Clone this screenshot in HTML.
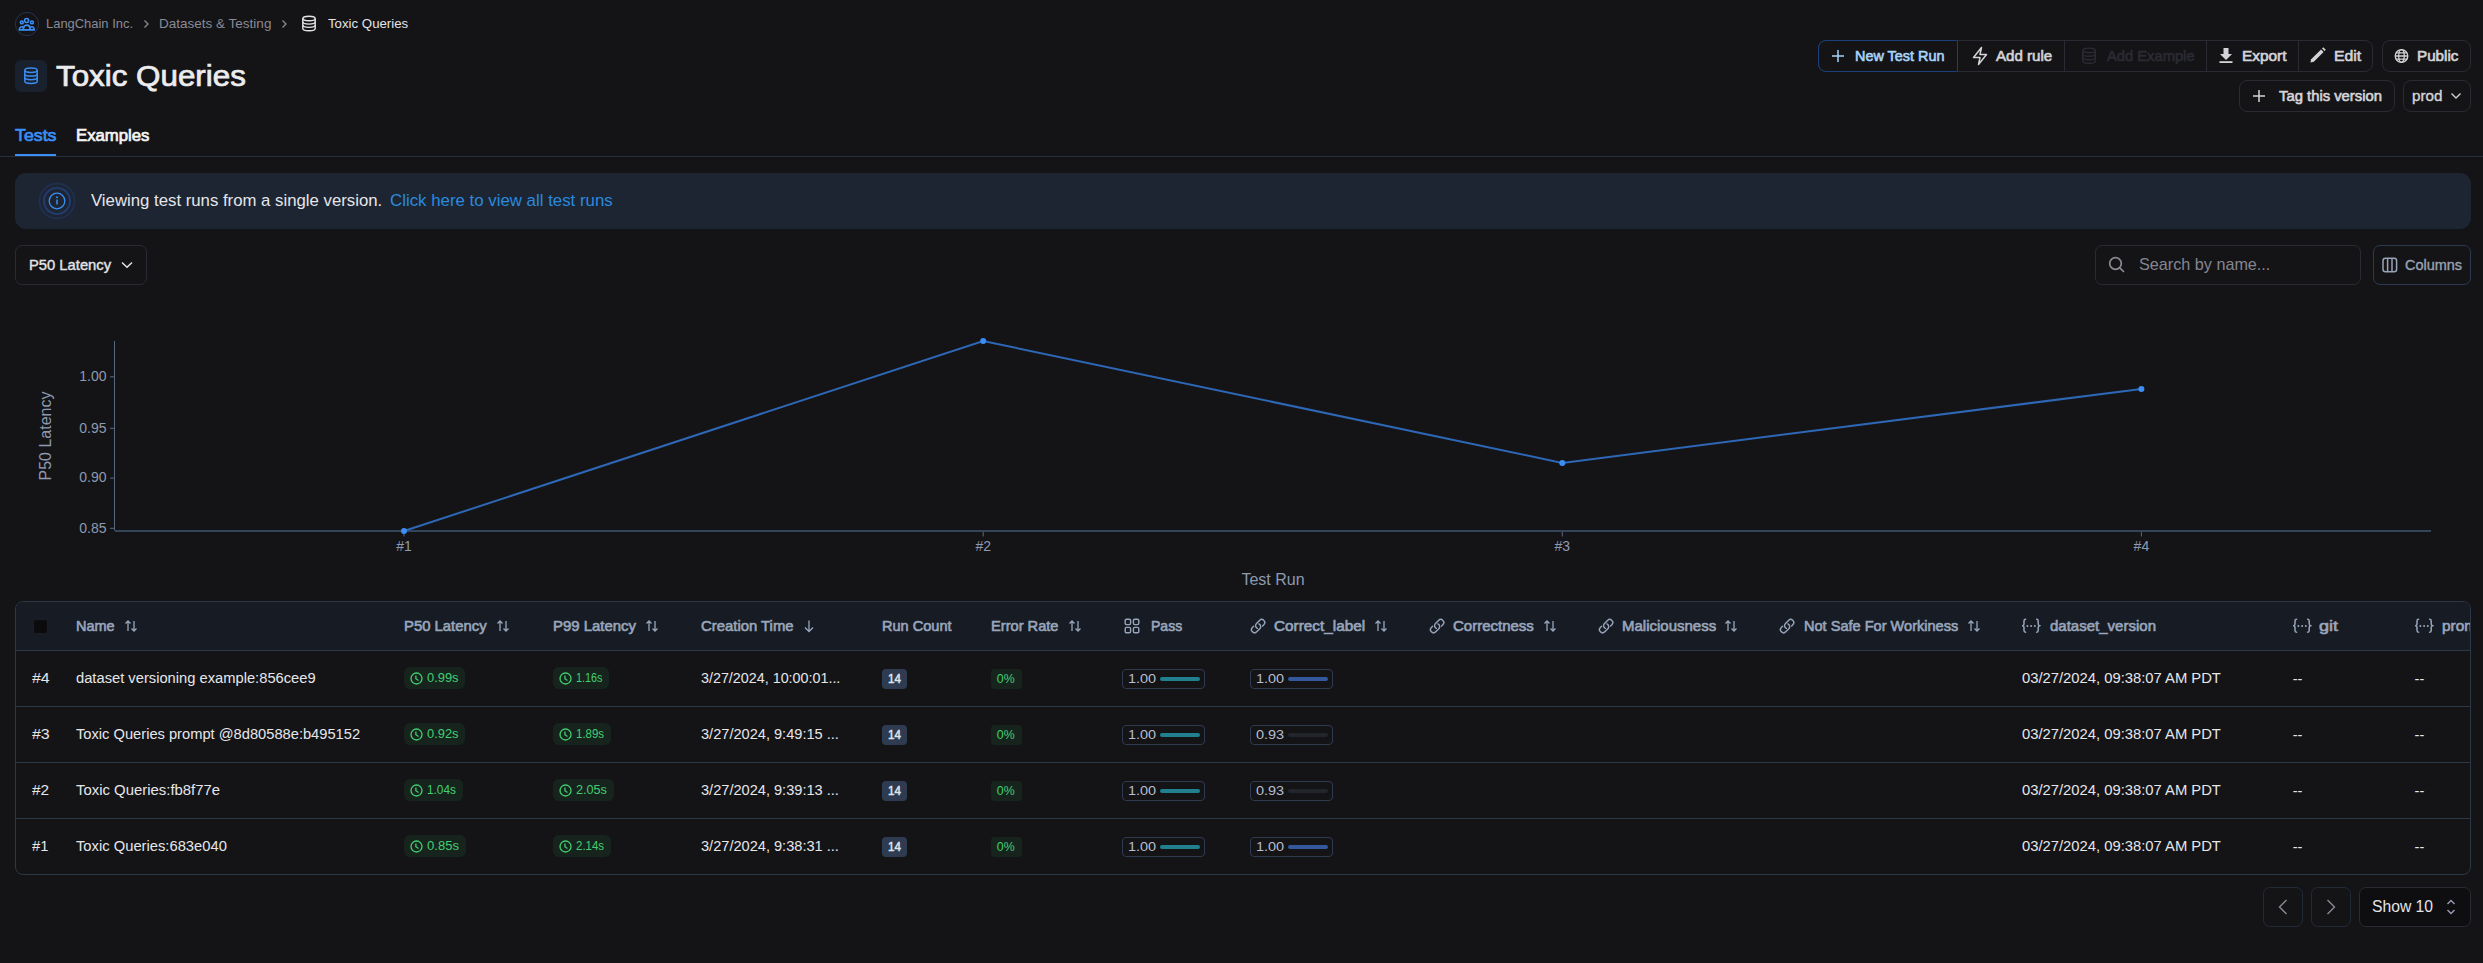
<!DOCTYPE html>
<html><head><meta charset="utf-8"><title>Toxic Queries</title>
<style>
html,body{margin:0;padding:0;}
body{width:2483px;height:963px;background:#141417;position:relative;overflow:hidden;font-family:"Liberation Sans",sans-serif;}
.t{position:absolute;line-height:40px;white-space:nowrap;}
.r{position:absolute;}
</style></head><body>
<svg class="r" style="left:15px;top:12px;" width="24" height="24" viewBox="0 0 24 24" fill="none"><circle cx="12" cy="12" r="11.6" stroke="#26364d" stroke-width="1"/><g stroke="#3b8ef5" stroke-width="1.6" fill="none" stroke-linecap="round"><circle cx="11.6" cy="8.5" r="2.0"/><circle cx="6.8" cy="10.4" r="1.4"/><circle cx="16.9" cy="10.4" r="1.4"/><path d="M4.4 17.9H19.2"/><path d="M4.4 17.6c0-1.8 1.1-2.8 2.5-2.8.9 0 1.5.3 1.9.8M19.2 17.6c0-1.8-1.1-2.8-2.5-2.8-.9 0-1.5.3-1.9.8"/><path d="M8.2 17.6c0-2.8 1.5-4.5 3.5-4.5s3.5 1.7 3.5 4.5"/></g></svg>
<div class="t" style="left:45.7px;top:4px;font-size:13.3px;color:#8a8a95;transform:scaleX(0.9723);transform-origin:0 0;">LangChain Inc.</div>
<svg class="r" style="left:142px;top:18px;" width="10" height="12" viewBox="0 0 10 12" fill="none"><path d="M2.5 2.5l3.5 3.5-3.5 3.5" stroke="#8a8a95" stroke-width="1.3"/></svg>
<div class="t" style="left:159.3px;top:4px;font-size:13.3px;color:#8a8a95;transform:scaleX(1.0161);transform-origin:0 0;">Datasets &amp; Testing</div>
<svg class="r" style="left:280px;top:18px;" width="10" height="12" viewBox="0 0 10 12" fill="none"><path d="M2.5 2.5l3.5 3.5-3.5 3.5" stroke="#8a8a95" stroke-width="1.3"/></svg>
<svg class="r" style="left:301px;top:15px;" width="16" height="17" viewBox="0 0 16 17" fill="none"><g stroke="#e4e4e7" stroke-width="1.4"><ellipse cx="8" cy="3.5" rx="6.2" ry="2.3"/><path d="M1.8 3.5v10c0 1.3 2.8 2.3 6.2 2.3s6.2-1 6.2-2.3v-10"/><path d="M1.8 6.8c0 1.3 2.8 2.3 6.2 2.3s6.2-1 6.2-2.3M1.8 10.1c0 1.3 2.8 2.3 6.2 2.3s6.2-1 6.2-2.3"/></g></svg>
<div class="t" style="left:327.8px;top:4px;font-size:13.3px;color:#e4e4e7;transform:scaleX(0.9954);transform-origin:0 0;">Toxic Queries</div>
<div class="r" style="left:15px;top:60px;width:32px;height:32px;background:#19212e;border-radius:6px"></div>
<svg class="r" style="left:23px;top:67px;" width="16" height="18" viewBox="0 0 16 18" fill="none"><g stroke="#3b8ef5" stroke-width="1.5"><ellipse cx="8" cy="3.2" rx="6.2" ry="2.2"/><path d="M1.8 3.2v11c0 1.2 2.8 2.2 6.2 2.2s6.2-1 6.2-2.2v-11"/><path d="M1.8 6.9c0 1.2 2.8 2.2 6.2 2.2s6.2-1 6.2-2.2M1.8 10.5c0 1.2 2.8 2.2 6.2 2.2s6.2-1 6.2-2.2"/></g></svg>
<div class="t" style="left:55.6px;top:56px;font-size:29.6px;color:#ececef;transform:scaleX(1.0591);transform-origin:0 0;-webkit-text-stroke-width:0.74px;">Toxic Queries</div>
<div class="r" style="left:1818px;top:40px;width:555px;height:32px;border:1px solid #2a2a33;border-radius:8px;box-sizing:border-box"></div>
<div class="r" style="left:1818px;top:40px;width:140px;height:32px;border:1px solid #193f7e;border-radius:8px 0 0 8px;box-sizing:border-box"></div>
<div class="r" style="left:2064px;top:41px;width:1px;height:30px;background:#2a2a33"></div>
<div class="r" style="left:2206px;top:41px;width:1px;height:30px;background:#2a2a33"></div>
<div class="r" style="left:2298px;top:41px;width:1px;height:30px;background:#2a2a33"></div>
<svg class="r" style="left:1831px;top:49px;" width="14" height="14" viewBox="0 0 14 14" fill="none"><path d="M7 1v12M1 7h12" stroke="#a6d4fa" stroke-width="1.5"/></svg>
<div class="t" style="left:1855.3px;top:36px;font-size:15.3px;color:#a6d4fa;transform:scaleX(0.9422);transform-origin:0 0;-webkit-text-stroke-width:0.64px;">New Test Run</div>
<svg class="r" style="left:1971px;top:46px;" width="19" height="20" viewBox="0 0 19 20" fill="none"><path d="M10.5 1.5L2.5 11.5h6.5l-1.5 7 8-10H9z" stroke="#d4d4d8" stroke-width="1.5" stroke-linejoin="round"/></svg>
<div class="t" style="left:1995.9px;top:36px;font-size:15.3px;color:#d4d4d8;transform:scaleX(0.9863);transform-origin:0 0;-webkit-text-stroke-width:0.64px;">Add rule</div>
<svg class="r" style="left:2081px;top:47px;" width="16" height="18" viewBox="0 0 16 18" fill="none"><g stroke="#2b2b33" stroke-width="1.4"><ellipse cx="8" cy="3.4" rx="6.3" ry="2.3"/><path d="M1.7 3.4v10.6c0 1.3 2.8 2.3 6.3 2.3s6.3-1 6.3-2.3V3.4"/><path d="M1.7 6.9c0 1.3 2.8 2.3 6.3 2.3s6.3-1 6.3-2.3M1.7 10.4c0 1.3 2.8 2.3 6.3 2.3s6.3-1 6.3-2.3"/></g></svg>
<div class="t" style="left:2106.7px;top:36px;font-size:15.3px;color:#2b2b33;transform:scaleX(0.9626);transform-origin:0 0;-webkit-text-stroke-width:0.64px;">Add Example</div>
<svg class="r" style="left:2218px;top:47px;" width="16" height="17" viewBox="0 0 16 17" fill="none"><path d="M5.5 1h5v6h3.5L8 13 2 7h3.5z" fill="#d4d4d8"/><rect x="1.5" y="14.2" width="13" height="1.8" fill="#d4d4d8"/></svg>
<div class="t" style="left:2242.0px;top:36px;font-size:15.3px;color:#d4d4d8;transform:scaleX(1.0069);transform-origin:0 0;-webkit-text-stroke-width:0.64px;">Export</div>
<svg class="r" style="left:2309px;top:46px;" width="18" height="18" viewBox="0 0 18 18" fill="none"><path d="M2.2 13.2L12 3.4l2.6 2.6-9.8 9.8-3.4.8z" fill="#d4d4d8"/><path d="M13 2.4l1.2-1.2 2.6 2.6-1.2 1.2z" fill="#d4d4d8"/></svg>
<div class="t" style="left:2334.2px;top:36px;font-size:15.3px;color:#d4d4d8;transform:scaleX(1.0298);transform-origin:0 0;-webkit-text-stroke-width:0.64px;">Edit</div>
<div class="r" style="left:2382px;top:40px;width:89px;height:32px;border:1px solid #2a2a33;border-radius:8px;box-sizing:border-box"></div>
<svg class="r" style="left:2394px;top:48px;" width="15" height="16" viewBox="0 0 15 16" fill="none"><g stroke="#d4d4d8" stroke-width="1.3"><circle cx="7.5" cy="8" r="6.3"/><ellipse cx="7.5" cy="8" rx="2.8" ry="6.3"/><path d="M1.2 8h12.6M2 4.8h11M2 11.2h11"/></g></svg>
<div class="t" style="left:2417.0px;top:36px;font-size:15.3px;color:#d4d4d8;transform:scaleX(0.9938);transform-origin:0 0;-webkit-text-stroke-width:0.64px;">Public</div>
<div class="r" style="left:2239px;top:80px;width:156px;height:32px;border:1px solid #2a2a33;border-radius:8px;box-sizing:border-box"></div>
<svg class="r" style="left:2252px;top:89px;" width="14" height="14" viewBox="0 0 14 14" fill="none"><path d="M7 1v12M1 7h12" stroke="#d4d4d8" stroke-width="1.5"/></svg>
<div class="t" style="left:2279.2px;top:76px;font-size:15.3px;color:#d4d4d8;transform:scaleX(0.9690);transform-origin:0 0;-webkit-text-stroke-width:0.64px;">Tag this version</div>
<div class="r" style="left:2403px;top:80px;width:68px;height:32px;border:1px solid #2a2a33;border-radius:8px;box-sizing:border-box"></div>
<div class="t" style="left:2412.0px;top:76px;font-size:15.1px;color:#d4d4d8;transform:scaleX(1.0064);transform-origin:0 0;-webkit-text-stroke-width:0.38px;">prod</div>
<svg class="r" style="left:2450px;top:92px;" width="12" height="8" viewBox="0 0 12 8" fill="none"><path d="M1.5 1.5l4.5 4.5 4.5-4.5" stroke="#d4d4d8" stroke-width="1.3"/></svg>
<div class="t" style="left:15.0px;top:116px;font-size:16.6px;color:#3b8ef5;transform:scaleX(1.0705);transform-origin:0 0;-webkit-text-stroke-width:0.70px;">Tests</div>
<div class="t" style="left:76.3px;top:116px;font-size:16.6px;color:#f4f4f5;transform:scaleX(1.0075);transform-origin:0 0;-webkit-text-stroke-width:0.70px;">Examples</div>
<div class="r" style="left:0px;top:156px;width:2483px;height:1px;background:#243042"></div>
<div class="r" style="left:15px;top:154px;width:41px;height:2px;background:#3b8ef5"></div>
<div class="r" style="left:15px;top:173px;width:2456px;height:56px;background:#1d2533;border-radius:11px"></div>
<svg class="r" style="left:37px;top:181px;" width="40" height="40" viewBox="0 0 40 40" fill="none"><circle cx="20" cy="20" r="17.5" stroke="#1f2f4c" stroke-width="2"/><circle cx="20" cy="20" r="13" stroke="#223b6c" stroke-width="2.2"/><circle cx="20" cy="20" r="7.8" stroke="#3b8ef5" stroke-width="1.3"/><path d="M20 18.6v5" stroke="#3b8ef5" stroke-width="1.5"/><circle cx="20" cy="16.2" r="0.95" fill="#3b8ef5"/></svg>
<div class="t" style="left:91.2px;top:181px;font-size:16.7px;color:#e6e6ea;transform:scaleX(1.0041);transform-origin:0 0;">Viewing test runs from a single version.</div>
<div class="t" style="left:390.0px;top:181px;font-size:16.7px;color:#2a8ade;transform:scaleX(1.0090);transform-origin:0 0;">Click here to view all test runs</div>
<div class="r" style="left:15px;top:245px;width:132px;height:40px;border:1px solid #2a2a33;border-radius:7px;box-sizing:border-box"></div>
<div class="t" style="left:28.6px;top:245px;font-size:15.2px;color:#e4e4e7;transform:scaleX(0.9722);transform-origin:0 0;-webkit-text-stroke-width:0.38px;">P50 Latency</div>
<svg class="r" style="left:120px;top:260px;" width="14" height="10" viewBox="0 0 14 10" fill="none"><path d="M2 2.5l5 4.8 5-4.8" stroke="#e4e4e7" stroke-width="1.5"/></svg>
<div class="r" style="left:2095px;top:245px;width:266px;height:40px;border:1px solid #2a2a33;border-radius:7px;box-sizing:border-box"></div>
<svg class="r" style="left:2107px;top:255px;" width="20" height="20" viewBox="0 0 20 20" fill="none"><circle cx="8.5" cy="8.5" r="5.8" stroke="#8a8a95" stroke-width="1.7"/><path d="M12.8 12.8l4.2 4.2" stroke="#8a8a95" stroke-width="1.7"/></svg>
<div class="t" style="left:2139.3px;top:244px;font-size:16.1px;color:#85858f;transform:scaleX(1.0058);transform-origin:0 0;">Search by name...</div>
<div class="r" style="left:2373px;top:245px;width:98px;height:40px;border:1px solid #2b3a50;border-radius:7px;box-sizing:border-box"></div>
<svg class="r" style="left:2382px;top:257px;" width="16" height="16" viewBox="0 0 16 16" fill="none"><rect x="1" y="1.2" width="13.6" height="13.6" rx="2.5" stroke="#97a3b6" stroke-width="1.5"/><path d="M5.6 1.5v13M10 1.5v13" stroke="#97a3b6" stroke-width="1.5"/></svg>
<div class="t" style="left:2405.0px;top:245px;font-size:14.8px;color:#97a3b6;transform:scaleX(0.9773);transform-origin:0 0;-webkit-text-stroke-width:0.37px;">Columns</div>
<svg class="r" style="left:0;top:0" width="2483" height="963" font-family="Liberation Sans"><line x1="114.5" y1="341" x2="114.5" y2="530.5" stroke="#586880" stroke-width="1"/><line x1="115" y1="531" x2="2431" y2="531" stroke="#34445a" stroke-width="2"/><line x1="110" y1="376.8" x2="114.5" y2="376.8" stroke="#586880" stroke-width="1"/><text x="106.5" y="381.0" text-anchor="end" font-size="14" fill="#8e9ab0">1.00</text><line x1="110" y1="428.3" x2="114.5" y2="428.3" stroke="#586880" stroke-width="1"/><text x="106.5" y="432.5" text-anchor="end" font-size="14" fill="#8e9ab0">0.95</text><line x1="110" y1="478.1" x2="114.5" y2="478.1" stroke="#586880" stroke-width="1"/><text x="106.5" y="482.3" text-anchor="end" font-size="14" fill="#8e9ab0">0.90</text><line x1="110" y1="528.3" x2="114.5" y2="528.3" stroke="#586880" stroke-width="1"/><text x="106.5" y="532.5" text-anchor="end" font-size="14" fill="#8e9ab0">0.85</text><line x1="404" y1="532" x2="404" y2="536.5" stroke="#586880" stroke-width="1"/><text x="404" y="551.3" text-anchor="middle" font-size="14" fill="#8e9ab0">#1</text><line x1="983.2" y1="532" x2="983.2" y2="536.5" stroke="#586880" stroke-width="1"/><text x="983.2" y="551.3" text-anchor="middle" font-size="14" fill="#8e9ab0">#2</text><line x1="1562.3" y1="532" x2="1562.3" y2="536.5" stroke="#586880" stroke-width="1"/><text x="1562.3" y="551.3" text-anchor="middle" font-size="14" fill="#8e9ab0">#3</text><line x1="2141.4" y1="532" x2="2141.4" y2="536.5" stroke="#586880" stroke-width="1"/><text x="2141.4" y="551.3" text-anchor="middle" font-size="14" fill="#8e9ab0">#4</text><polyline points="404,531 983.2,341 1562.3,462.9 2141.4,388.9" stroke="#2d67b6" stroke-width="2" fill="none"/><circle cx="404" cy="531" r="3" fill="#3b8ef5"/><circle cx="983.2" cy="341" r="3" fill="#3b8ef5"/><circle cx="1562.3" cy="462.9" r="3" fill="#3b8ef5"/><circle cx="2141.4" cy="388.9" r="3" fill="#3b8ef5"/><text x="1273" y="585" text-anchor="middle" font-size="16" fill="#8e9ab0">Test Run</text><text transform="translate(50.8 436) rotate(-90)" text-anchor="middle" font-size="16" fill="#8e9ab0">P50 Latency</text></svg>
<div class="r" style="left:15px;top:601px;width:2456px;height:274px;border:1px solid #2c3747;border-radius:8px;box-sizing:border-box;overflow:hidden"></div>
<div class="r" style="left:16px;top:602px;width:2454px;height:48px;background:#171b24;border-radius:7px 7px 0 0"></div>
<div class="r" style="left:16px;top:650px;width:2454px;height:1px;background:#2c3747"></div>
<div class="r" style="left:16px;top:706px;width:2454px;height:1px;background:#2c3747"></div>
<div class="r" style="left:16px;top:762px;width:2454px;height:1px;background:#2c3747"></div>
<div class="r" style="left:16px;top:818px;width:2454px;height:1px;background:#2c3747"></div>
<div class="r" style="left:32.5px;top:618.5px;width:15px;height:15px;background:#0b0b0e;border-radius:3px;border:1px solid #1c1c22;box-sizing:border-box"></div>
<div class="t" style="left:76.4px;top:606px;font-size:14.6px;color:#98a6bc;transform:scaleX(0.9931);transform-origin:0 0;-webkit-text-stroke-width:0.61px;">Name</div>
<svg class="r" style="left:124px;top:619px;" width="14" height="14" viewBox="0 0 14 14" fill="none"><g stroke="#98a6bc" stroke-width="1.3"><path d="M4 12V2M1.5 4.5L4 2l2.5 2.5"/><path d="M10 2v10M7.5 9.5L10 12l2.5-2.5"/></g></svg>
<div class="t" style="left:404.3px;top:606px;font-size:14.6px;color:#98a6bc;transform:scaleX(1.0179);transform-origin:0 0;-webkit-text-stroke-width:0.61px;">P50 Latency</div>
<svg class="r" style="left:496px;top:619px;" width="14" height="14" viewBox="0 0 14 14" fill="none"><g stroke="#98a6bc" stroke-width="1.3"><path d="M4 12V2M1.5 4.5L4 2l2.5 2.5"/><path d="M10 2v10M7.5 9.5L10 12l2.5-2.5"/></g></svg>
<div class="t" style="left:552.8px;top:606px;font-size:14.6px;color:#98a6bc;transform:scaleX(1.0216);transform-origin:0 0;-webkit-text-stroke-width:0.61px;">P99 Latency</div>
<svg class="r" style="left:644.5px;top:619px;" width="14" height="14" viewBox="0 0 14 14" fill="none"><g stroke="#98a6bc" stroke-width="1.3"><path d="M4 12V2M1.5 4.5L4 2l2.5 2.5"/><path d="M10 2v10M7.5 9.5L10 12l2.5-2.5"/></g></svg>
<div class="t" style="left:701.3px;top:606px;font-size:14.6px;color:#98a6bc;transform:scaleX(1.0193);transform-origin:0 0;-webkit-text-stroke-width:0.61px;">Creation Time</div>
<svg class="r" style="left:802px;top:619px;" width="14" height="14" viewBox="0 0 14 14" fill="none"><g stroke="#98a6bc" stroke-width="1.3"><path d="M7 1.5v11M3 8.5l4 4 4-4"/></g></svg>
<div class="t" style="left:882.1px;top:606px;font-size:14.6px;color:#98a6bc;transform:scaleX(0.9970);transform-origin:0 0;-webkit-text-stroke-width:0.61px;">Run Count</div>
<div class="t" style="left:991.3px;top:606px;font-size:14.6px;color:#98a6bc;transform:scaleX(1.0025);transform-origin:0 0;-webkit-text-stroke-width:0.61px;">Error Rate</div>
<svg class="r" style="left:1067.5px;top:619px;" width="14" height="14" viewBox="0 0 14 14" fill="none"><g stroke="#98a6bc" stroke-width="1.3"><path d="M4 12V2M1.5 4.5L4 2l2.5 2.5"/><path d="M10 2v10M7.5 9.5L10 12l2.5-2.5"/></g></svg>
<svg class="r" style="left:1124px;top:618px;" width="16" height="16" viewBox="0 0 16 16" fill="none"><g stroke="#98a6bc" stroke-width="1.4"><rect x="1.2" y="1.2" width="5.4" height="5.4" rx="1.3"/><rect x="9.4" y="1.2" width="5.4" height="5.4" rx="1.3"/><rect x="1.2" y="9.4" width="5.4" height="5.4" rx="1.3"/><rect x="9.4" y="9.4" width="5.4" height="5.4" rx="1.3"/></g></svg>
<div class="t" style="left:1150.6px;top:606px;font-size:14.6px;color:#98a6bc;transform:scaleX(0.9627);transform-origin:0 0;-webkit-text-stroke-width:0.61px;">Pass</div>
<svg class="r" style="left:1249.8px;top:617.9px" width="16.25" height="16.25" viewBox="0 0 24 24" fill="none"><path d="M13.19 8.688a4.5 4.5 0 011.242 7.244l-4.5 4.5a4.5 4.5 0 01-6.364-6.364l1.757-1.757m13.35-.622l1.757-1.757a4.5 4.5 0 00-6.364-6.364l-4.5 4.5a4.5 4.5 0 001.242 7.244" stroke="#98a6bc" stroke-width="2.1" stroke-linecap="round" stroke-linejoin="round"/></svg>
<div class="t" style="left:1274.3px;top:606px;font-size:14.6px;color:#98a6bc;transform:scaleX(1.0498);transform-origin:0 0;-webkit-text-stroke-width:0.61px;">Correct_label</div>
<svg class="r" style="left:1374px;top:619px;" width="14" height="14" viewBox="0 0 14 14" fill="none"><g stroke="#98a6bc" stroke-width="1.3"><path d="M4 12V2M1.5 4.5L4 2l2.5 2.5"/><path d="M10 2v10M7.5 9.5L10 12l2.5-2.5"/></g></svg>
<svg class="r" style="left:1428.8px;top:617.9px" width="16.25" height="16.25" viewBox="0 0 24 24" fill="none"><path d="M13.19 8.688a4.5 4.5 0 011.242 7.244l-4.5 4.5a4.5 4.5 0 01-6.364-6.364l1.757-1.757m13.35-.622l1.757-1.757a4.5 4.5 0 00-6.364-6.364l-4.5 4.5a4.5 4.5 0 001.242 7.244" stroke="#98a6bc" stroke-width="2.1" stroke-linecap="round" stroke-linejoin="round"/></svg>
<div class="t" style="left:1453.3px;top:606px;font-size:14.6px;color:#98a6bc;transform:scaleX(1.0270);transform-origin:0 0;-webkit-text-stroke-width:0.61px;">Correctness</div>
<svg class="r" style="left:1543px;top:619px;" width="14" height="14" viewBox="0 0 14 14" fill="none"><g stroke="#98a6bc" stroke-width="1.3"><path d="M4 12V2M1.5 4.5L4 2l2.5 2.5"/><path d="M10 2v10M7.5 9.5L10 12l2.5-2.5"/></g></svg>
<svg class="r" style="left:1597.8px;top:617.9px" width="16.25" height="16.25" viewBox="0 0 24 24" fill="none"><path d="M13.19 8.688a4.5 4.5 0 011.242 7.244l-4.5 4.5a4.5 4.5 0 01-6.364-6.364l1.757-1.757m13.35-.622l1.757-1.757a4.5 4.5 0 00-6.364-6.364l-4.5 4.5a4.5 4.5 0 001.242 7.244" stroke="#98a6bc" stroke-width="2.1" stroke-linecap="round" stroke-linejoin="round"/></svg>
<div class="t" style="left:1622.0px;top:606px;font-size:14.6px;color:#98a6bc;transform:scaleX(1.0278);transform-origin:0 0;-webkit-text-stroke-width:0.61px;">Maliciousness</div>
<svg class="r" style="left:1724px;top:619px;" width="14" height="14" viewBox="0 0 14 14" fill="none"><g stroke="#98a6bc" stroke-width="1.3"><path d="M4 12V2M1.5 4.5L4 2l2.5 2.5"/><path d="M10 2v10M7.5 9.5L10 12l2.5-2.5"/></g></svg>
<svg class="r" style="left:1779.3px;top:617.9px" width="16.25" height="16.25" viewBox="0 0 24 24" fill="none"><path d="M13.19 8.688a4.5 4.5 0 011.242 7.244l-4.5 4.5a4.5 4.5 0 01-6.364-6.364l1.757-1.757m13.35-.622l1.757-1.757a4.5 4.5 0 00-6.364-6.364l-4.5 4.5a4.5 4.5 0 001.242 7.244" stroke="#98a6bc" stroke-width="2.1" stroke-linecap="round" stroke-linejoin="round"/></svg>
<div class="t" style="left:1804.0px;top:606px;font-size:14.6px;color:#98a6bc;transform:scaleX(0.9976);transform-origin:0 0;-webkit-text-stroke-width:0.61px;">Not Safe For Workiness</div>
<svg class="r" style="left:1967px;top:619px;" width="14" height="14" viewBox="0 0 14 14" fill="none"><g stroke="#98a6bc" stroke-width="1.3"><path d="M4 12V2M1.5 4.5L4 2l2.5 2.5"/><path d="M10 2v10M7.5 9.5L10 12l2.5-2.5"/></g></svg>
<svg class="r" style="left:2022.2px;top:618px;" width="19" height="16" viewBox="0 0 19 16" fill="none"><g stroke="#98a6bc" stroke-width="1.5" fill="none" stroke-linecap="round"><path d="M3.6 1.2C2.5 1.2 2 1.8 2 2.9v2.9c0 1-.5 1.7-1.2 1.9.7.2 1.2.9 1.2 1.9v2.9c0 1.1.5 1.7 1.6 1.7"/><path d="M14.6 1.2c1.1 0 1.6.6 1.6 1.7v2.9c0 1 .5 1.7 1.2 1.9-.7.2-1.2.9-1.2 1.9v2.9c0 1.1-.5 1.7-1.6 1.7"/></g><g fill="#98a6bc"><circle cx="5.4" cy="8" r="1"/><circle cx="9.1" cy="8" r="1"/><circle cx="12.8" cy="8" r="1"/></g></svg>
<div class="t" style="left:2050.0px;top:606px;font-size:14.6px;color:#98a6bc;transform:scaleX(1.0287);transform-origin:0 0;-webkit-text-stroke-width:0.61px;">dataset_version</div>
<svg class="r" style="left:2292.8px;top:618px;" width="19" height="16" viewBox="0 0 19 16" fill="none"><g stroke="#98a6bc" stroke-width="1.5" fill="none" stroke-linecap="round"><path d="M3.6 1.2C2.5 1.2 2 1.8 2 2.9v2.9c0 1-.5 1.7-1.2 1.9.7.2 1.2.9 1.2 1.9v2.9c0 1.1.5 1.7 1.6 1.7"/><path d="M14.6 1.2c1.1 0 1.6.6 1.6 1.7v2.9c0 1 .5 1.7 1.2 1.9-.7.2-1.2.9-1.2 1.9v2.9c0 1.1-.5 1.7-1.6 1.7"/></g><g fill="#98a6bc"><circle cx="5.4" cy="8" r="1"/><circle cx="9.1" cy="8" r="1"/><circle cx="12.8" cy="8" r="1"/></g></svg>
<div class="t" style="left:2319.4px;top:606px;font-size:14.6px;color:#98a6bc;transform:scaleX(1.2375);transform-origin:0 0;-webkit-text-stroke-width:0.61px;">git</div>
<svg class="r" style="left:2414.5px;top:618px;" width="19" height="16" viewBox="0 0 19 16" fill="none"><g stroke="#98a6bc" stroke-width="1.5" fill="none" stroke-linecap="round"><path d="M3.6 1.2C2.5 1.2 2 1.8 2 2.9v2.9c0 1-.5 1.7-1.2 1.9.7.2 1.2.9 1.2 1.9v2.9c0 1.1.5 1.7 1.6 1.7"/><path d="M14.6 1.2c1.1 0 1.6.6 1.6 1.7v2.9c0 1 .5 1.7 1.2 1.9-.7.2-1.2.9-1.2 1.9v2.9c0 1.1-.5 1.7-1.6 1.7"/></g><g fill="#98a6bc"><circle cx="5.4" cy="8" r="1"/><circle cx="9.1" cy="8" r="1"/><circle cx="12.8" cy="8" r="1"/></g></svg>
<div class="r" style="left:2441.8px;top:606px;width:28.7px;height:40px;overflow:hidden"><div class="t" style="left:0;top:0;font-size:14.6px;color:#98a6bc;transform:scaleX(1.0551);transform-origin:0 0;-webkit-text-stroke-width:0.61px;">prompt</div></div>
<div class="t" style="left:32.0px;top:658px;font-size:14.9px;color:#e6e6ea;transform:scaleX(1.0711);transform-origin:0 0;">#4</div>
<div class="t" style="left:76.4px;top:658px;font-size:14.9px;color:#e6e6ea;transform:scaleX(0.9881);transform-origin:0 0;">dataset versioning example:856cee9</div>
<div class="r" style="left:404px;top:667px;width:61px;height:22px;background:#17241d;border-radius:6px"></div>
<svg class="r" style="left:409.5px;top:671.5px;" width="13" height="13" viewBox="0 0 13 13" fill="none"><circle cx="6.5" cy="6.5" r="5.5" stroke="#41cf72" stroke-width="1.3"/><path d="M5.9 3.4v3.3l2.6 1.8" stroke="#41cf72" stroke-width="1.3"/></svg>
<div class="t" style="left:427.3px;top:658px;font-size:13px;color:#41cf72;transform:scaleX(0.9893);transform-origin:0 0;">0.99s</div>
<div class="r" style="left:553px;top:667px;width:56px;height:22px;background:#17241d;border-radius:6px"></div>
<svg class="r" style="left:558.5px;top:671.5px;" width="13" height="13" viewBox="0 0 13 13" fill="none"><circle cx="6.5" cy="6.5" r="5.5" stroke="#41cf72" stroke-width="1.3"/><path d="M5.9 3.4v3.3l2.6 1.8" stroke="#41cf72" stroke-width="1.3"/></svg>
<div class="t" style="left:576.3px;top:658px;font-size:13px;color:#41cf72;transform:scaleX(0.8282);transform-origin:0 0;">1.16s</div>
<div class="t" style="left:701.3px;top:658px;font-size:14.9px;color:#e6e6ea;transform:scaleX(0.9617);transform-origin:0 0;">3/27/2024, 10:00:01...</div>
<div class="r" style="left:882px;top:669px;width:25px;height:20px;background:#2f3b50;border-radius:4px"></div>
<div class="t" style="left:888.0px;top:659px;font-size:12.5px;color:#dfe3ea;transform:scaleX(0.9273);transform-origin:0 0;-webkit-text-stroke-width:0.53px;">14</div>
<div class="r" style="left:990.7px;top:669px;width:31px;height:20px;background:#17241d;border-radius:4px"></div>
<div class="t" style="left:996.8px;top:659px;font-size:12.3px;color:#41cf72;">0%</div>
<div class="r" style="left:1122px;top:669px;width:83px;height:20px;border:1px solid #2f3b4e;border-radius:4px;box-sizing:border-box"></div>
<div class="t" style="left:1127.9px;top:659px;font-size:13px;color:#b4bece;transform:scaleX(1.1128);transform-origin:0 0;">1.00</div>
<div class="r" style="left:1159.8px;top:677px;width:40.3px;height:4px;background:#21808e;border-radius:2px"></div>
<div class="r" style="left:1250px;top:669px;width:83px;height:20px;border:1px solid #2f3b4e;border-radius:4px;box-sizing:border-box"></div>
<div class="t" style="left:1255.9px;top:659px;font-size:13px;color:#b4bece;transform:scaleX(1.1128);transform-origin:0 0;">1.00</div>
<div class="r" style="left:1288px;top:677px;width:40.3px;height:4px;background:#34589c;border-radius:2px"></div>
<div class="t" style="left:2022.0px;top:658px;font-size:14.9px;color:#e6e6ea;transform:scaleX(0.9927);transform-origin:0 0;">03/27/2024, 09:38:07 AM PDT</div>
<div class="t" style="left:2292.7px;top:659px;font-size:14.6px;color:#e6e6ea;">--</div>
<div class="t" style="left:2414.6px;top:659px;font-size:14.6px;color:#e6e6ea;">--</div>
<div class="t" style="left:32.0px;top:714px;font-size:14.9px;color:#e6e6ea;transform:scaleX(1.0711);transform-origin:0 0;">#3</div>
<div class="t" style="left:76.4px;top:714px;font-size:14.9px;color:#e6e6ea;transform:scaleX(0.9854);transform-origin:0 0;">Toxic Queries prompt @8d80588e:b495152</div>
<div class="r" style="left:404px;top:723px;width:61px;height:22px;background:#17241d;border-radius:6px"></div>
<svg class="r" style="left:409.5px;top:727.5px;" width="13" height="13" viewBox="0 0 13 13" fill="none"><circle cx="6.5" cy="6.5" r="5.5" stroke="#41cf72" stroke-width="1.3"/><path d="M5.9 3.4v3.3l2.6 1.8" stroke="#41cf72" stroke-width="1.3"/></svg>
<div class="t" style="left:427.3px;top:714px;font-size:13px;color:#41cf72;transform:scaleX(0.9893);transform-origin:0 0;">0.92s</div>
<div class="r" style="left:553px;top:723px;width:57.7px;height:22px;background:#17241d;border-radius:6px"></div>
<svg class="r" style="left:558.5px;top:727.5px;" width="13" height="13" viewBox="0 0 13 13" fill="none"><circle cx="6.5" cy="6.5" r="5.5" stroke="#41cf72" stroke-width="1.3"/><path d="M5.9 3.4v3.3l2.6 1.8" stroke="#41cf72" stroke-width="1.3"/></svg>
<div class="t" style="left:576.3px;top:714px;font-size:13px;color:#41cf72;transform:scaleX(0.8829);transform-origin:0 0;">1.89s</div>
<div class="t" style="left:701.3px;top:714px;font-size:14.9px;color:#e6e6ea;transform:scaleX(0.9796);transform-origin:0 0;">3/27/2024, 9:49:15 ...</div>
<div class="r" style="left:882px;top:725px;width:25px;height:20px;background:#2f3b50;border-radius:4px"></div>
<div class="t" style="left:888.0px;top:715px;font-size:12.5px;color:#dfe3ea;transform:scaleX(0.9273);transform-origin:0 0;-webkit-text-stroke-width:0.53px;">14</div>
<div class="r" style="left:990.7px;top:725px;width:31px;height:20px;background:#17241d;border-radius:4px"></div>
<div class="t" style="left:996.8px;top:715px;font-size:12.3px;color:#41cf72;">0%</div>
<div class="r" style="left:1122px;top:725px;width:83px;height:20px;border:1px solid #2f3b4e;border-radius:4px;box-sizing:border-box"></div>
<div class="t" style="left:1127.9px;top:715px;font-size:13px;color:#b4bece;transform:scaleX(1.1128);transform-origin:0 0;">1.00</div>
<div class="r" style="left:1159.8px;top:733px;width:40.3px;height:4px;background:#21808e;border-radius:2px"></div>
<div class="r" style="left:1250px;top:725px;width:83px;height:20px;border:1px solid #2f3b4e;border-radius:4px;box-sizing:border-box"></div>
<div class="t" style="left:1255.9px;top:715px;font-size:13px;color:#b4bece;transform:scaleX(1.1128);transform-origin:0 0;">0.93</div>
<div class="r" style="left:1288px;top:733px;width:40.3px;height:4px;background:#22252b;border-radius:2px"></div>
<div class="t" style="left:2022.0px;top:714px;font-size:14.9px;color:#e6e6ea;transform:scaleX(0.9927);transform-origin:0 0;">03/27/2024, 09:38:07 AM PDT</div>
<div class="t" style="left:2292.7px;top:715px;font-size:14.6px;color:#e6e6ea;">--</div>
<div class="t" style="left:2414.6px;top:715px;font-size:14.6px;color:#e6e6ea;">--</div>
<div class="t" style="left:32.0px;top:770px;font-size:14.9px;color:#e6e6ea;transform:scaleX(1.0329);transform-origin:0 0;">#2</div>
<div class="t" style="left:76.4px;top:770px;font-size:14.9px;color:#e6e6ea;transform:scaleX(1.0004);transform-origin:0 0;">Toxic Queries:fb8f77e</div>
<div class="r" style="left:404px;top:779px;width:58.5px;height:22px;background:#17241d;border-radius:6px"></div>
<svg class="r" style="left:409.5px;top:783.5px;" width="13" height="13" viewBox="0 0 13 13" fill="none"><circle cx="6.5" cy="6.5" r="5.5" stroke="#41cf72" stroke-width="1.3"/><path d="M5.9 3.4v3.3l2.6 1.8" stroke="#41cf72" stroke-width="1.3"/></svg>
<div class="t" style="left:427.3px;top:770px;font-size:13px;color:#41cf72;transform:scaleX(0.9087);transform-origin:0 0;">1.04s</div>
<div class="r" style="left:553px;top:779px;width:60.5px;height:22px;background:#17241d;border-radius:6px"></div>
<svg class="r" style="left:558.5px;top:783.5px;" width="13" height="13" viewBox="0 0 13 13" fill="none"><circle cx="6.5" cy="6.5" r="5.5" stroke="#41cf72" stroke-width="1.3"/><path d="M5.9 3.4v3.3l2.6 1.8" stroke="#41cf72" stroke-width="1.3"/></svg>
<div class="t" style="left:576.3px;top:770px;font-size:13px;color:#41cf72;transform:scaleX(0.9732);transform-origin:0 0;">2.05s</div>
<div class="t" style="left:701.3px;top:770px;font-size:14.9px;color:#e6e6ea;transform:scaleX(0.9796);transform-origin:0 0;">3/27/2024, 9:39:13 ...</div>
<div class="r" style="left:882px;top:781px;width:25px;height:20px;background:#2f3b50;border-radius:4px"></div>
<div class="t" style="left:888.0px;top:771px;font-size:12.5px;color:#dfe3ea;transform:scaleX(0.9273);transform-origin:0 0;-webkit-text-stroke-width:0.53px;">14</div>
<div class="r" style="left:990.7px;top:781px;width:31px;height:20px;background:#17241d;border-radius:4px"></div>
<div class="t" style="left:996.8px;top:771px;font-size:12.3px;color:#41cf72;">0%</div>
<div class="r" style="left:1122px;top:781px;width:83px;height:20px;border:1px solid #2f3b4e;border-radius:4px;box-sizing:border-box"></div>
<div class="t" style="left:1127.9px;top:771px;font-size:13px;color:#b4bece;transform:scaleX(1.1128);transform-origin:0 0;">1.00</div>
<div class="r" style="left:1159.8px;top:789px;width:40.3px;height:4px;background:#21808e;border-radius:2px"></div>
<div class="r" style="left:1250px;top:781px;width:83px;height:20px;border:1px solid #2f3b4e;border-radius:4px;box-sizing:border-box"></div>
<div class="t" style="left:1255.9px;top:771px;font-size:13px;color:#b4bece;transform:scaleX(1.1128);transform-origin:0 0;">0.93</div>
<div class="r" style="left:1288px;top:789px;width:40.3px;height:4px;background:#22252b;border-radius:2px"></div>
<div class="t" style="left:2022.0px;top:770px;font-size:14.9px;color:#e6e6ea;transform:scaleX(0.9927);transform-origin:0 0;">03/27/2024, 09:38:07 AM PDT</div>
<div class="t" style="left:2292.7px;top:771px;font-size:14.6px;color:#e6e6ea;">--</div>
<div class="t" style="left:2414.6px;top:771px;font-size:14.6px;color:#e6e6ea;">--</div>
<div class="t" style="left:32.0px;top:826px;font-size:14.9px;color:#e6e6ea;transform:scaleX(0.9883);transform-origin:0 0;">#1</div>
<div class="t" style="left:76.4px;top:826px;font-size:14.9px;color:#e6e6ea;transform:scaleX(0.9906);transform-origin:0 0;">Toxic Queries:683e040</div>
<div class="r" style="left:404px;top:835px;width:61.5px;height:22px;background:#17241d;border-radius:6px"></div>
<svg class="r" style="left:409.5px;top:839.5px;" width="13" height="13" viewBox="0 0 13 13" fill="none"><circle cx="6.5" cy="6.5" r="5.5" stroke="#41cf72" stroke-width="1.3"/><path d="M5.9 3.4v3.3l2.6 1.8" stroke="#41cf72" stroke-width="1.3"/></svg>
<div class="t" style="left:427.3px;top:826px;font-size:13px;color:#41cf72;transform:scaleX(1.0054);transform-origin:0 0;">0.85s</div>
<div class="r" style="left:553px;top:835px;width:57.7px;height:22px;background:#17241d;border-radius:6px"></div>
<svg class="r" style="left:558.5px;top:839.5px;" width="13" height="13" viewBox="0 0 13 13" fill="none"><circle cx="6.5" cy="6.5" r="5.5" stroke="#41cf72" stroke-width="1.3"/><path d="M5.9 3.4v3.3l2.6 1.8" stroke="#41cf72" stroke-width="1.3"/></svg>
<div class="t" style="left:576.3px;top:826px;font-size:13px;color:#41cf72;transform:scaleX(0.8829);transform-origin:0 0;">2.14s</div>
<div class="t" style="left:701.3px;top:826px;font-size:14.9px;color:#e6e6ea;transform:scaleX(0.9796);transform-origin:0 0;">3/27/2024, 9:38:31 ...</div>
<div class="r" style="left:882px;top:837px;width:25px;height:20px;background:#2f3b50;border-radius:4px"></div>
<div class="t" style="left:888.0px;top:827px;font-size:12.5px;color:#dfe3ea;transform:scaleX(0.9273);transform-origin:0 0;-webkit-text-stroke-width:0.53px;">14</div>
<div class="r" style="left:990.7px;top:837px;width:31px;height:20px;background:#17241d;border-radius:4px"></div>
<div class="t" style="left:996.8px;top:827px;font-size:12.3px;color:#41cf72;">0%</div>
<div class="r" style="left:1122px;top:837px;width:83px;height:20px;border:1px solid #2f3b4e;border-radius:4px;box-sizing:border-box"></div>
<div class="t" style="left:1127.9px;top:827px;font-size:13px;color:#b4bece;transform:scaleX(1.1128);transform-origin:0 0;">1.00</div>
<div class="r" style="left:1159.8px;top:845px;width:40.3px;height:4px;background:#21808e;border-radius:2px"></div>
<div class="r" style="left:1250px;top:837px;width:83px;height:20px;border:1px solid #2f3b4e;border-radius:4px;box-sizing:border-box"></div>
<div class="t" style="left:1255.9px;top:827px;font-size:13px;color:#b4bece;transform:scaleX(1.1128);transform-origin:0 0;">1.00</div>
<div class="r" style="left:1288px;top:845px;width:40.3px;height:4px;background:#34589c;border-radius:2px"></div>
<div class="t" style="left:2022.0px;top:826px;font-size:14.9px;color:#e6e6ea;transform:scaleX(0.9927);transform-origin:0 0;">03/27/2024, 09:38:07 AM PDT</div>
<div class="t" style="left:2292.7px;top:827px;font-size:14.6px;color:#e6e6ea;">--</div>
<div class="t" style="left:2414.6px;top:827px;font-size:14.6px;color:#e6e6ea;">--</div>
<div class="r" style="left:2263px;top:887px;width:40px;height:40px;border:1px solid #222a38;border-radius:7px;box-sizing:border-box"></div>
<svg class="r" style="left:2275px;top:897px;" width="16" height="20" viewBox="0 0 16 20" fill="none"><path d="M11.5 3l-7 7 7 7" stroke="#8a8a95" stroke-width="1.4"/></svg>
<div class="r" style="left:2311px;top:887px;width:40px;height:40px;border:1px solid #222a38;border-radius:7px;box-sizing:border-box"></div>
<svg class="r" style="left:2323px;top:897px;" width="16" height="20" viewBox="0 0 16 20" fill="none"><path d="M4.5 3l7 7-7 7" stroke="#8a8a95" stroke-width="1.4"/></svg>
<div class="r" style="left:2359px;top:887px;width:112px;height:40px;background:#0e0e11;border:1px solid #2a2a33;border-radius:7px;box-sizing:border-box"></div>
<div class="t" style="left:2372.1px;top:886px;font-size:16.3px;color:#e4e4e7;transform:scaleX(0.9632);transform-origin:0 0;">Show 10</div>
<svg class="r" style="left:2445px;top:898px;" width="12" height="18" viewBox="0 0 12 18" fill="none"><g stroke="#9a9ab5" stroke-width="1.4"><path d="M2.5 6l3.5-3.5L9.5 6"/><path d="M2.5 12l3.5 3.5L9.5 12"/></g></svg>
</body></html>
